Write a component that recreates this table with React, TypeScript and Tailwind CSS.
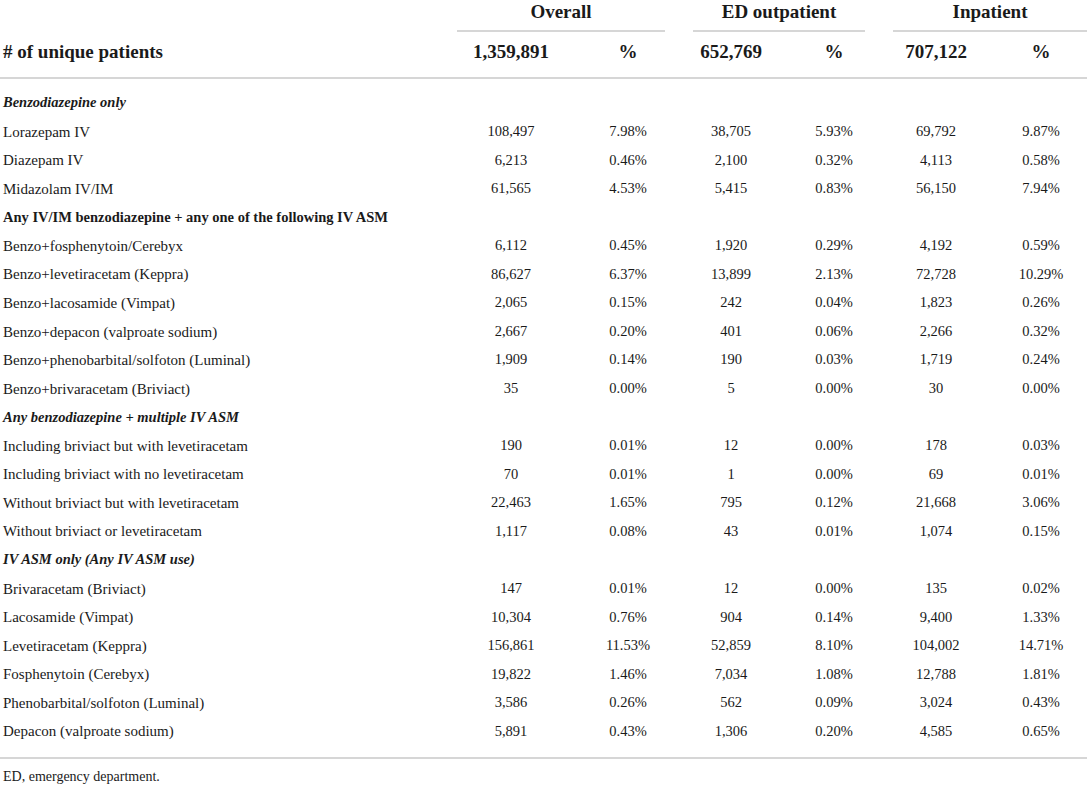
type Row =
  | { kind: "section"; label: string; italic: boolean }
  | { kind: "data"; label: string; v: [string, string, string, string, string, string] };

const rows: Row[] = [
  { kind: "section", label: "Benzodiazepine only", italic: true },
  { kind: "data", label: "Lorazepam IV", v: ["108,497", "7.98%", "38,705", "5.93%", "69,792", "9.87%"] },
  { kind: "data", label: "Diazepam IV", v: ["6,213", "0.46%", "2,100", "0.32%", "4,113", "0.58%"] },
  { kind: "data", label: "Midazolam IV/IM", v: ["61,565", "4.53%", "5,415", "0.83%", "56,150", "7.94%"] },
  { kind: "section", label: "Any IV/IM benzodiazepine + any one of the following IV ASM", italic: false },
  { kind: "data", label: "Benzo+fosphenytoin/Cerebyx", v: ["6,112", "0.45%", "1,920", "0.29%", "4,192", "0.59%"] },
  { kind: "data", label: "Benzo+levetiracetam (Keppra)", v: ["86,627", "6.37%", "13,899", "2.13%", "72,728", "10.29%"] },
  { kind: "data", label: "Benzo+lacosamide (Vimpat)", v: ["2,065", "0.15%", "242", "0.04%", "1,823", "0.26%"] },
  { kind: "data", label: "Benzo+depacon (valproate sodium)", v: ["2,667", "0.20%", "401", "0.06%", "2,266", "0.32%"] },
  { kind: "data", label: "Benzo+phenobarbital/solfoton (Luminal)", v: ["1,909", "0.14%", "190", "0.03%", "1,719", "0.24%"] },
  { kind: "data", label: "Benzo+brivaracetam (Briviact)", v: ["35", "0.00%", "5", "0.00%", "30", "0.00%"] },
  { kind: "section", label: "Any benzodiazepine + multiple IV ASM", italic: true },
  { kind: "data", label: "Including briviact but with levetiracetam", v: ["190", "0.01%", "12", "0.00%", "178", "0.03%"] },
  { kind: "data", label: "Including briviact with no levetiracetam", v: ["70", "0.01%", "1", "0.00%", "69", "0.01%"] },
  { kind: "data", label: "Without briviact but with levetiracetam", v: ["22,463", "1.65%", "795", "0.12%", "21,668", "3.06%"] },
  { kind: "data", label: "Without briviact or levetiracetam", v: ["1,117", "0.08%", "43", "0.01%", "1,074", "0.15%"] },
  { kind: "section", label: "IV ASM only (Any IV ASM use)", italic: true },
  { kind: "data", label: "Brivaracetam (Briviact)", v: ["147", "0.01%", "12", "0.00%", "135", "0.02%"] },
  { kind: "data", label: "Lacosamide (Vimpat)", v: ["10,304", "0.76%", "904", "0.14%", "9,400", "1.33%"] },
  { kind: "data", label: "Levetiracetam (Keppra)", v: ["156,861", "11.53%", "52,859", "8.10%", "104,002", "14.71%"] },
  { kind: "data", label: "Fosphenytoin (Cerebyx)", v: ["19,822", "1.46%", "7,034", "1.08%", "12,788", "1.81%"] },
  { kind: "data", label: "Phenobarbital/solfoton (Luminal)", v: ["3,586", "0.26%", "562", "0.09%", "3,024", "0.43%"] },
  { kind: "data", label: "Depacon (valproate sodium)", v: ["5,891", "0.43%", "1,306", "0.20%", "4,585", "0.65%"] },
];

// label | N | % | N | % | N | %
const cols = "grid grid-cols-[452px_118px_116px_90px_116px_88px_107px]";

export default function App() {
  return (
    <div className="w-[1091px] min-h-[786px] bg-white font-['Liberation_Serif',serif] text-[#1a1a1a]">
      <div className="w-[1087px]">
        {/* group headings */}
        <div className={cols}>
          <div />
          <div className="col-span-2 ml-[5px] mr-[21px] h-[32px] border-b-2 border-[#d6d6d6] text-center text-[19px] font-bold leading-[24px]">
            Overall
          </div>
          <div className="col-span-2 ml-[7px] mr-[27px] h-[32px] border-b-2 border-[#d6d6d6] text-center text-[19px] font-bold leading-[24px]">
            ED outpatient
          </div>
          <div className="col-span-2 ml-[1px] h-[32px] border-b-2 border-[#d6d6d6] text-center text-[19px] font-bold leading-[24px]">
            Inpatient
          </div>
        </div>

        {/* totals */}
        <div className={`${cols} h-[47px] border-b-2 border-[#d6d6d6] pt-[8px] text-[19px] font-bold leading-[24px]`}>
          <div className="pl-[3px]"># of unique patients</div>
          <div className="text-center">1,359,891</div>
          <div className="text-center">%</div>
          <div className="text-center">652,769</div>
          <div className="text-center">%</div>
          <div className="text-center">707,122</div>
          <div className="pl-[15px] text-center">%</div>
        </div>

        {/* body */}
        <div className="border-b-2 border-[#d6d6d6] pt-[10px] pb-[11px]">
          {rows.map((r, i) =>
            r.kind === "section" ? (
              <div
                key={i}
                className={`flex h-[28.57px] items-center pl-[3px] text-[14.5px] font-bold ${r.italic ? "italic" : ""}`}
              >
                {r.label}
              </div>
            ) : (
              <div key={i} className={`${cols} h-[28.57px] items-center text-[14.5px]`}>
                <div className="pl-[3px] text-[15px]">{r.label}</div>
                <div className="text-center">{r.v[0]}</div>
                <div className="text-center">{r.v[1]}</div>
                <div className="text-center">{r.v[2]}</div>
                <div className="text-center">{r.v[3]}</div>
                <div className="text-center">{r.v[4]}</div>
                <div className="pl-[15px] text-center">{r.v[5]}</div>
              </div>
            )
          )}
        </div>

        <div className="mt-[8px] pl-[3px] text-[14px] leading-[20px]">ED, emergency department.</div>
      </div>
    </div>
  );
}
